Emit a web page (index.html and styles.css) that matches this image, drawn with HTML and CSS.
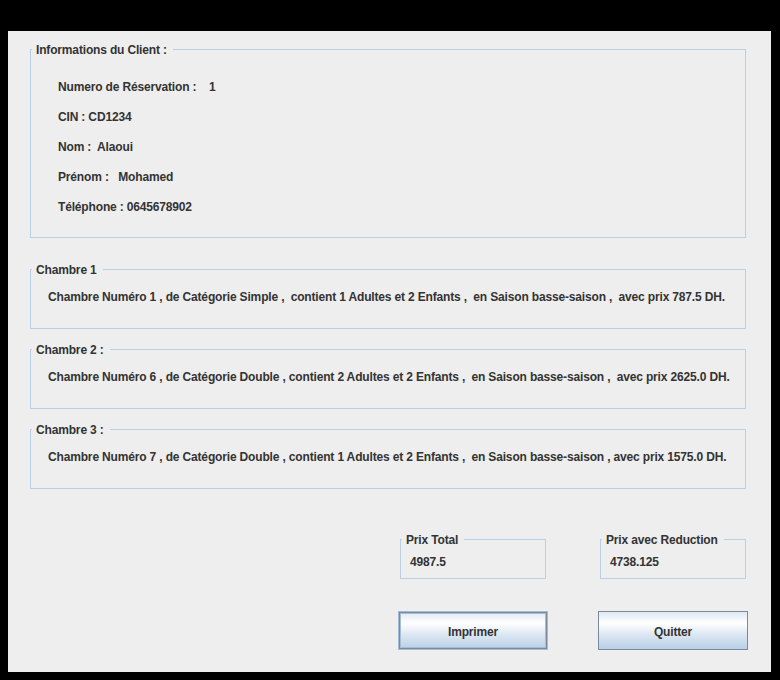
FILE: index.html
```html
<!DOCTYPE html>
<html lang="fr">
<head>
<meta charset="utf-8">
<title>Réservation</title>
<link rel="stylesheet" href="styles.css">
</head>
<body>
<div class="panel">
  <fieldset class="group info">
    <legend>Informations du Client :</legend>
    <div class="info-body">
      <div class="row">Numero de Réservation :    1</div>
      <div class="row">CIN : CD1234</div>
      <div class="row">Nom :  Alaoui</div>
      <div class="row">Prénom :   Mohamed</div>
      <div class="row">Téléphone : 0645678902</div>
    </div>
  </fieldset>

  <fieldset class="group room first">
    <legend>Chambre 1</legend>
    <div class="room-body">Chambre Numéro 1 , de Catégorie Simple ,  contient 1 Adultes et 2 Enfants ,  en Saison basse-saison ,  avec prix 787.5 DH.</div>
  </fieldset>

  <fieldset class="group room">
    <legend>Chambre 2 :</legend>
    <div class="room-body">Chambre Numéro 6 , de Catégorie Double , contient 2 Adultes et 2 Enfants ,  en Saison basse-saison ,  avec prix 2625.0 DH.</div>
  </fieldset>

  <fieldset class="group room">
    <legend>Chambre 3 :</legend>
    <div class="room-body">Chambre Numéro 7 , de Catégorie Double , contient 1 Adultes et 2 Enfants ,  en Saison basse-saison , avec prix 1575.0 DH.</div>
  </fieldset>

  <div class="prices">
    <fieldset class="group price">
      <legend>Prix Total</legend>
      <div class="price-body">4987.5</div>
    </fieldset>
    <fieldset class="group price">
      <legend>Prix avec Reduction</legend>
      <div class="price-body">4738.125</div>
    </fieldset>
  </div>

  <div class="actions">
    <button class="btn focused" type="button">Imprimer</button>
    <button class="btn" type="button">Quitter</button>
  </div>
</div>
</body>
</html>
```

FILE: styles.css
```css
html, body {
  margin: 0;
  padding: 0;
  background: #000000;
}

body {
  font-family: "Liberation Sans", Arial, sans-serif;
  font-size: 12px;
  font-weight: bold;
  letter-spacing: -0.16px;
  color: #333333;
}

.panel {
  box-sizing: border-box;
  width: 763px;
  height: 641px;
  margin: 31px 0 0 8px;
  padding: 11px 25px 0 22px;
  background: #eeeeee;
  display: flex;
  flex-direction: column;
}

.group {
  margin: 0;
  padding: 0;
  border: 1px solid #b8cfe5;
  min-width: 0;
}

.group legend {
  margin-left: 1px;
  padding: 2px 6px 0 4px;
  line-height: 13px;
  white-space: pre;
}

.info-body {
  padding: 15px 0 15px 27px;
}

.row {
  line-height: 30px;
  white-space: pre;
}

.room {
  margin-top: 13px;
}

.room.first {
  margin-top: 24px;
}

.room-body {
  padding: 10px 0 21px 17px;
  line-height: 20px;
  white-space: pre;
}

.prices {
  display: flex;
  justify-content: flex-end;
  gap: 54px;
  margin-top: 43px;
}

.price {
  width: 146px;
  box-sizing: border-box;
}

.price-body {
  padding: 5px 0 6px 9px;
  line-height: 20px;
}

.actions {
  display: flex;
  justify-content: flex-end;
  gap: 50px;
  margin-top: 32px;
  margin-right: -2px;
}

.btn {
  box-sizing: border-box;
  width: 150px;
  height: 39px;
  margin: 0;
  padding: 2px 0 0;
  font: inherit;
  letter-spacing: inherit;
  color: #333333;
  border: 1px solid #7a8a99;
  border-radius: 0;
  background: linear-gradient(to bottom, #dde8f3 0%, #ffffff 30%, #dde8f3 60%, #b8cfe5 100%);
}

.btn.focused {
  border-color: #a3bcd6;
  box-shadow: inset 0 0 0 1px #7a8a99, inset 0 0 0 2px #a9bdd2;
}
```
